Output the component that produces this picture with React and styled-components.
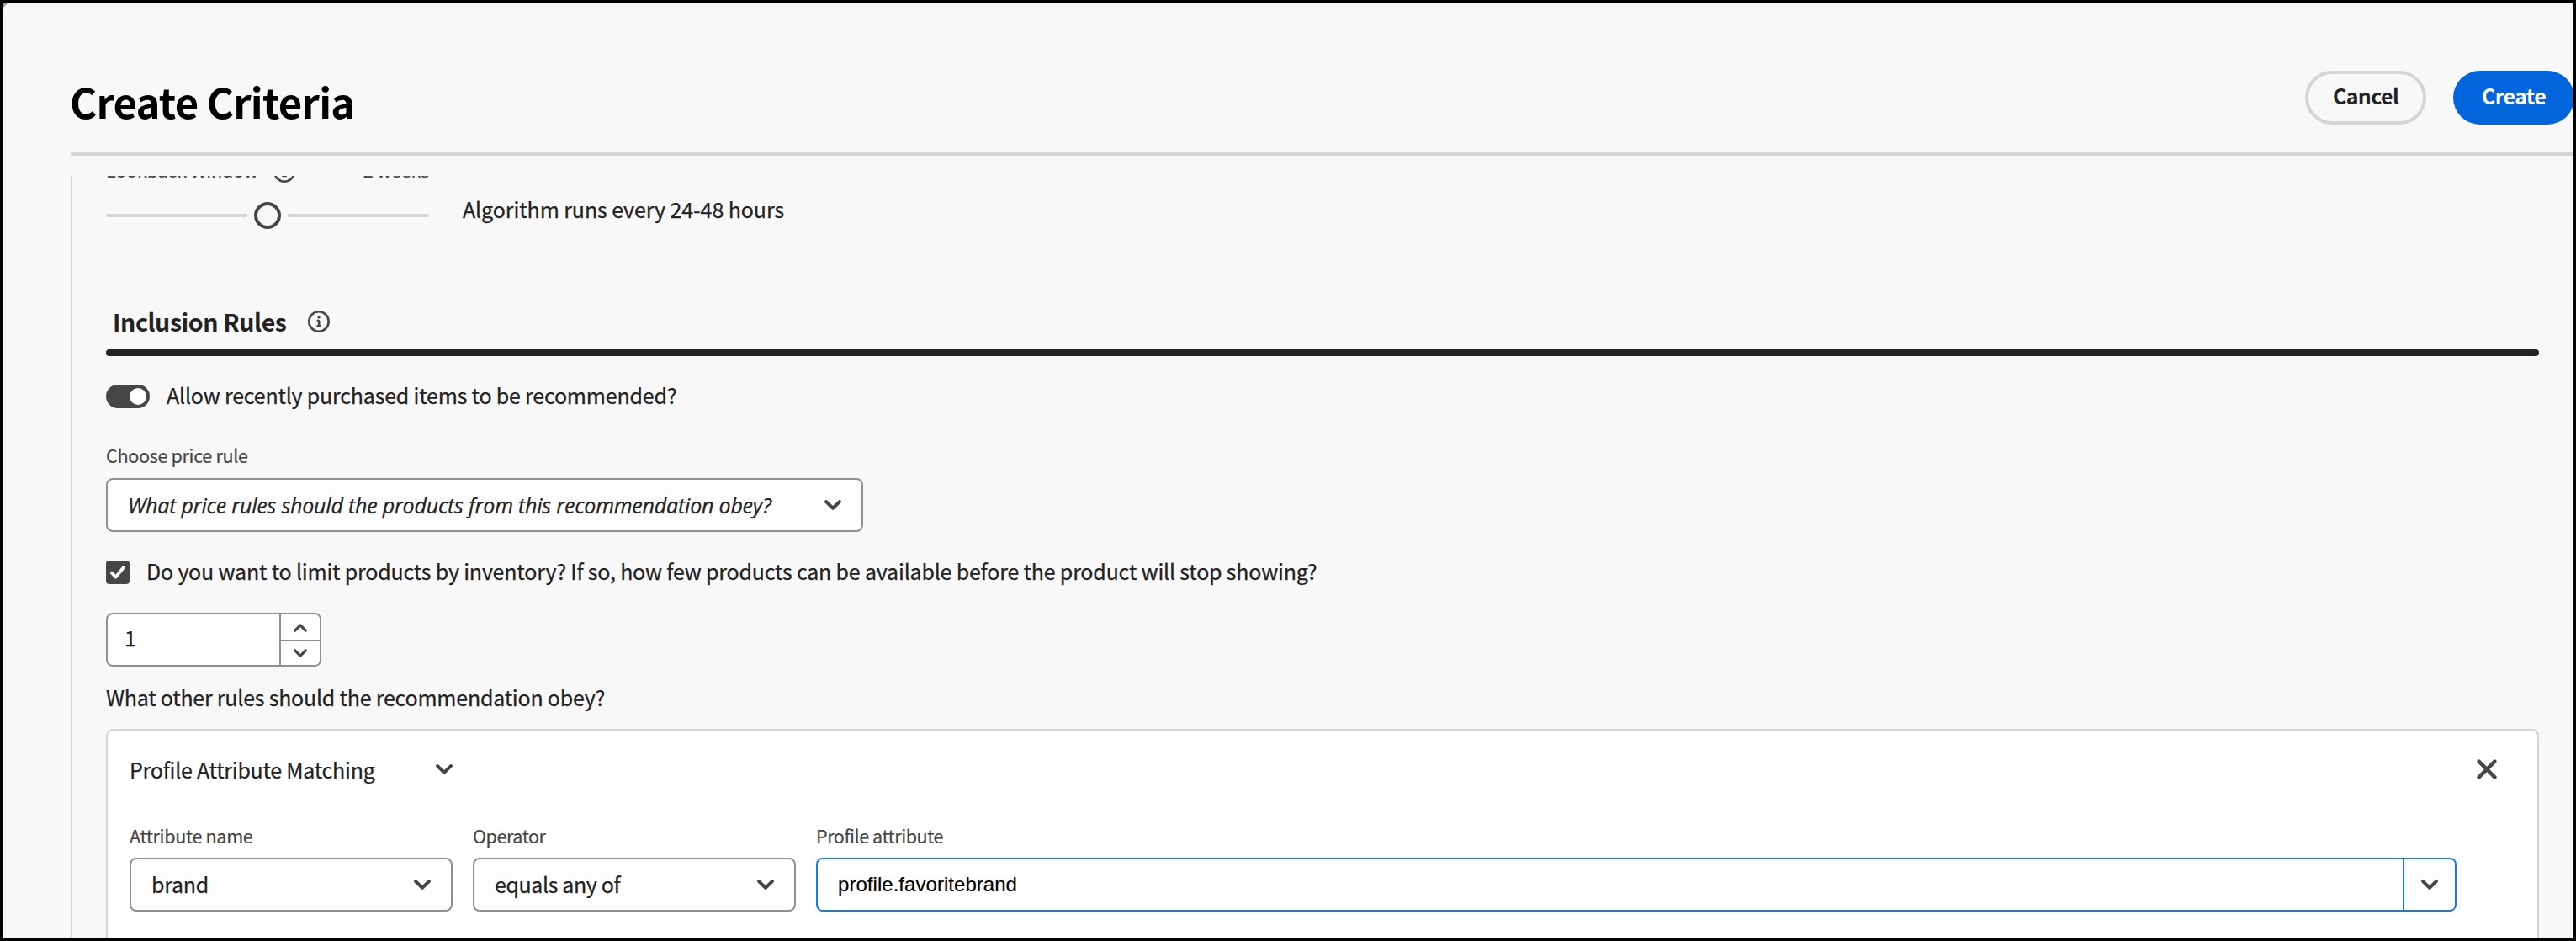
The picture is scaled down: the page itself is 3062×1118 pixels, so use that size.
import React from "react";
import styled, { createGlobalStyle } from "styled-components";

const ink = "#222222";
const muted = "#464646";
const rule = "#d5d5d5";
const outline = "#909090";
const focus = "#147af3";

const GlobalStyle = createGlobalStyle`
  *, *::before, *::after { box-sizing: border-box; }
  body { margin: 0; background: #000; }
  button, input { font: inherit; color: inherit; margin: 0; }
`;

const Frame = styled.div`
  display: flex;
  flex-direction: column;
  width: 3062px;
  height: 1118px;
  border: 4px solid #000;
  background: linear-gradient(135deg, #999 3px, #f8f8f8 4px);
  padding-left: 80px;
  overflow: hidden;
  color: ${ink};
  font-family: "Noto Sans CJK SC", "Noto Sans", sans-serif;
`;

const Header = styled.header`
  display: flex;
  flex: none;
  justify-content: space-between;
  align-items: flex-start;
  height: 181px;
  padding-top: 80px;
  margin-right: -2px;
  border-bottom: 4px solid ${rule};
  border-bottom-left-radius: 2px;
`;

const Title = styled.h1`
  margin: 6px 0 0 -1px;
  color: #000;
  font-size: 49px;
  line-height: 60px;
  font-weight: 700;
  letter-spacing: -0.75px;
`;

const Actions = styled.div`
  display: flex;
  gap: 32px;
`;

const PillButton = styled.button`
  display: flex;
  justify-content: center;
  width: 144px;
  height: 64px;
  padding: ${(p) => (p.$primary ? "12px 0 0 0" : "8px 0 0 0")};
  border: ${(p) => (p.$primary ? "0" : `4px solid ${rule}`)};
  border-radius: 32px;
  background: ${(p) => (p.$primary ? "#0265dc" : "transparent")};
  color: ${(p) => (p.$primary ? "#fff" : ink)};
  font-size: 25px;
  line-height: 34px;
  font-weight: 700;
  letter-spacing: -0.63px;
`;

const ScrollArea = styled.main`
  flex: 1;
  min-height: 0;
  margin-top: 24px;
  padding: 0 40px;
  border-left: 2px solid ${rule};
  overflow: hidden;
`;

const Body = styled.span`
  font-size: 25px;
  line-height: 34px;
  letter-spacing: ${(p) => p.$track ?? -0.2}px;
  white-space: nowrap;
  -webkit-text-stroke: 0.25px currentColor;
`;

const Label = styled.span`
  color: ${muted};
  font-size: 21.6px;
  line-height: 30px;
  letter-spacing: ${(p) => p.$track ?? -0.35}px;
  white-space: nowrap;
  -webkit-text-stroke: 0.2px currentColor;
`;

const LookbackRow = styled.div`
  display: flex;
  align-items: flex-start;
  gap: 40px;
  height: 85px;
  margin-top: -22px;
`;

const SliderField = styled.div`
  display: flex;
  flex-direction: column;
  gap: 23px;
  width: 384px;
`;

const SliderHeader = styled.div`
  display: flex;
  height: 30px;
  svg { margin: 4px 0 0 18px; }
`;

const SliderValue = styled(Label)`
  margin-left: auto;
`;

const SliderTrack = styled.div`
  display: flex;
  align-items: center;
  gap: 8px;
  height: 32px;
`;

const TrackPart = styled.div`
  flex: 1;
  height: 4px;
  background: ${rule};
  border-radius: ${(p) => (p.$end ? "0 2px 2px 0" : "2px 0 0 2px")};
`;

const Thumb = styled.div`
  width: 32px;
  height: 32px;
  border: 4px solid ${muted};
  border-radius: 50%;
`;

const RunNote = styled(Body)`
  padding-top: 44px;
`;

const SectionHeading = styled.div`
  display: flex;
  align-items: center;
  gap: 25px;
  height: 53px;
  margin-top: 90px;
  padding: 0 0 13px 8px;
`;

const SectionTitle = styled.h2`
  margin: 0;
  font-size: 28.5px;
  line-height: 40px;
  font-weight: 700;
  letter-spacing: -0.39px;
`;

const Divider = styled.hr`
  height: 8px;
  margin: 0;
  border: 0;
  border-radius: 4px;
  background: ${ink};
`;

const OptionRow = styled.label`
  display: flex;
  align-items: flex-start;
  gap: ${(p) => p.$gap}px;
  height: 34px;
  margin-top: 29px;
`;

const Toggle = styled.span`
  display: flex;
  justify-content: flex-end;
  width: 52px;
  height: 28px;
  margin-top: 5px;
  padding: 4px;
  border-radius: 14px;
  background: ${muted};
  &::after {
    content: "";
    width: 20px;
    height: 20px;
    border-radius: 50%;
    background: #fff;
  }
`;

const Checkbox = styled.span`
  display: flex;
  width: 28px;
  height: 28px;
  margin-top: 5px;
  border-radius: 4px;
  background: ${muted};
`;

const Field = styled.div`
  display: flex;
  flex-direction: column;
  gap: ${(p) => p.$gap ?? 11}px;
  width: ${(p) => p.$width}px;
  margin-top: ${(p) => p.$top ?? 0}px;
`;

const Select = styled.button`
  display: flex;
  justify-content: space-between;
  align-items: center;
  width: 100%;
  height: 64px;
  padding: 0 24px;
  border: 2px solid ${outline};
  border-radius: 8px;
  background: #fdfdfd;
`;

const SelectText = styled(Body)`
  margin-bottom: 2px;
`;

const Placeholder = styled.em`
  font-family: "Open Sans", "Noto Sans", sans-serif;
  font-size: 25px;
  line-height: 34px;
  letter-spacing: -0.2px;
  white-space: nowrap;
  -webkit-text-stroke: 0.25px currentColor;
`;

const Stepper = styled.div`
  display: flex;
  width: 256px;
  height: 64px;
  margin-top: 33px;
  border: 2px solid ${outline};
  border-radius: 8px;
  background: #fff;
  overflow: hidden;
`;

const StepperValue = styled(Body)`
  flex: 1;
  padding: 10px 0 0 20px;
`;

const StepperButtons = styled.div`
  display: flex;
  flex-direction: column;
  width: 48px;
  border-left: 2px solid ${outline};
`;

const StepButton = styled.button`
  display: flex;
  justify-content: center;
  align-items: center;
  height: ${(p) => (p.$down ? 28 : 32)}px;
  padding: ${(p) => (p.$down ? "0" : "2px 0 0")};
  border: 0;
  border-bottom: ${(p) => (p.$down ? "0" : `2px solid ${outline}`)};
  background: #fdfdfd;
`;

const Question = styled(Body)`
  display: block;
  margin-top: 19px;
`;

const RuleCard = styled.section`
  height: 300px;
  margin-top: 21px;
  padding: 29px 48px 0 26px;
  border: 2px solid ${rule};
  border-radius: 8px;
  background: #fff;
`;

const RuleHeader = styled.div`
  display: flex;
  align-items: center;
  justify-content: space-between;
  height: 34px;
`;

const RuleType = styled.div`
  display: flex;
  align-items: center;
  justify-content: space-between;
  width: 384px;
  height: 34px;
`;

const FieldRow = styled.div`
  display: flex;
  gap: 24px;
  margin-top: 47px;
`;

const ComboBox = styled.div`
  display: flex;
  height: 64px;
  border: 2px solid ${focus};
  border-radius: 8px;
  overflow: hidden;
`;

const ComboInput = styled.input`
  flex: 1;
  min-width: 0;
  padding: 0 24px 1px;
  border: 0;
  outline: 0;
  background: #fff;
  color: #000;
  font-family: "Liberation Sans", Arial, sans-serif;
  font-size: 24px;
  letter-spacing: 0.04px;
  -webkit-text-stroke: 0.2px currentColor;
`;

const ComboButton = styled.button`
  display: flex;
  align-items: center;
  justify-content: center;
  width: 62px;
  padding: 0;
  border: 0;
  border-left: 2px solid ${focus};
  background: #fdfdfd;
`;

const Icon = styled.svg`
  display: block;
  flex: none;
  fill: none;
  stroke: ${(p) => p.$color ?? muted};
  stroke-linecap: round;
  stroke-linejoin: round;
`;

const Chevron = () => (
  <Icon width="20" height="12" viewBox="0 0 20 12" strokeWidth="4">
    <path d="M2.1 2.1 L10 9.8 L17.9 2.1" />
  </Icon>
);

const StepChevron = ({ up }) => (
  <Icon width="16" height="10" viewBox="0 0 16 10" strokeWidth="3.2">
    <path d={up ? "M1.7 8.2 L8 1.9 L14.3 8.2" : "M1.7 1.8 L8 8.1 L14.3 1.8"} />
  </Icon>
);

const Cross = () => (
  <Icon width="24" height="24" viewBox="0 0 24 24" strokeWidth="4.4">
    <path d="M2.6 2.6 L21.4 21.4 M21.4 2.6 L2.6 21.4" />
  </Icon>
);

const Check = () => (
  <Icon $color="#fff" width="28" height="28" viewBox="0 0 28 28" strokeWidth="3.8">
    <path d="M7 14.7 L11.6 19.6 L21 8" />
  </Icon>
);

const Info = () => (
  <Icon width="26" height="26" viewBox="0 0 26 26" strokeWidth="2.6">
    <circle cx="13" cy="13" r="11.7" />
    <circle cx="13" cy="7.9" r="1.7" fill={muted} stroke="none" />
    <path d="M11.3 11.8 H13.2 V18 M11.1 18.2 H15.1" strokeWidth="1.9" />
    <path d="M13.1 12 V18" strokeWidth="2.6" strokeLinecap="butt" />
  </Icon>
);

const SelectField = ({ label, value, track, labelTrack }) => (
  <Field $width={384}>
    <Label $track={labelTrack}>{label}</Label>
    <Select>
      <SelectText $track={track}>{value}</SelectText>
      <Chevron />
    </Select>
  </Field>
);

export default function App() {
  return (
    <>
      <GlobalStyle />
      <Frame>
        <Header>
          <Title>Create Criteria</Title>
          <Actions>
            <PillButton>Cancel</PillButton>
            <PillButton $primary>Create</PillButton>
          </Actions>
        </Header>

        <ScrollArea>
          <LookbackRow>
            <SliderField>
              <SliderHeader>
                <Label $track={-0.22}>Lookback Window</Label>
                <Info />
                <SliderValue $track={-0.25}>2 weeks</SliderValue>
              </SliderHeader>
              <SliderTrack>
                <TrackPart />
                <Thumb />
                <TrackPart $end />
              </SliderTrack>
            </SliderField>
            <RunNote $track={-0.09}>Algorithm runs every 24-48 hours</RunNote>
          </LookbackRow>

          <SectionHeading>
            <SectionTitle>Inclusion Rules</SectionTitle>
            <Info />
          </SectionHeading>
          <Divider />

          <OptionRow $gap={20}>
            <Toggle />
            <Body>Allow recently purchased items to be recommended?</Body>
          </OptionRow>

          <Field $width={900} $top={40} $gap={12}>
            <Label>Choose price rule</Label>
            <Select>
              <Placeholder>
                What price rules should the products from this recommendation obey?
              </Placeholder>
              <Chevron />
            </Select>
          </Field>

          <OptionRow $gap={20}>
            <Checkbox>
              <Check />
            </Checkbox>
            <Body $track={-0.19}>
              Do you want to limit products by inventory? If so, how few products can be available
              before the product will stop showing?
            </Body>
          </OptionRow>

          <Stepper>
            <StepperValue>1</StepperValue>
            <StepperButtons>
              <StepButton>
                <StepChevron up />
              </StepButton>
              <StepButton $down>
                <StepChevron />
              </StepButton>
            </StepperButtons>
          </Stepper>

          <Question $track={-0.22}>What other rules should the recommendation obey?</Question>

          <RuleCard>
            <RuleHeader>
              <RuleType>
                <Body $track={-0.25}>Profile Attribute Matching</Body>
                <Chevron />
              </RuleType>
              <Cross />
            </RuleHeader>
            <FieldRow>
              <SelectField label="Attribute name" value="brand" track={-0.27} />
              <SelectField
                label="Operator"
                value="equals any of"
                track={-0.39}
                labelTrack={-0.47}
              />
              <Field $width={1950}>
                <Label $track={-0.47}>Profile attribute</Label>
                <ComboBox>
                  <ComboInput defaultValue="profile.favoritebrand" />
                  <ComboButton>
                    <Chevron />
                  </ComboButton>
                </ComboBox>
              </Field>
            </FieldRow>
          </RuleCard>
        </ScrollArea>
      </Frame>
    </>
  );
}
